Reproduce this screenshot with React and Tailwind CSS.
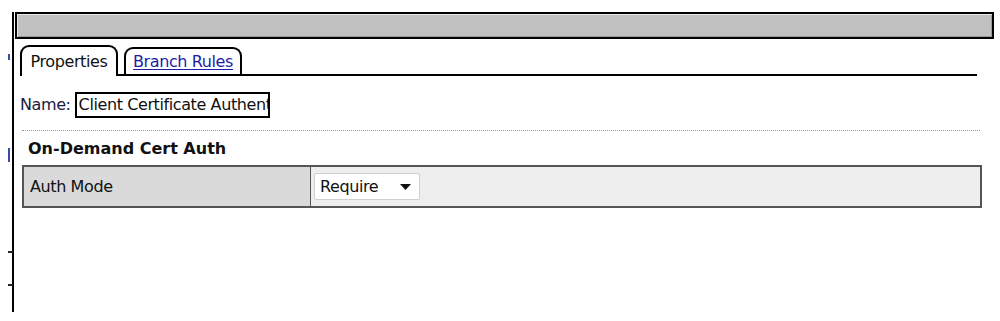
export default function App() {
  return (
    <div
      className="relative w-[1000px] h-[321px] bg-white overflow-hidden text-[#111]"
      style={{ fontFamily: '"DejaVu Sans", "Noto Sans", sans-serif' }}
    >
      {/* left edge marks */}
      <span className="absolute left-[8px] top-[54px] w-[2px] h-[6px] bg-[#3a4aa8]" />
      <span className="absolute left-[8px] top-[148px] w-[2px] h-[14px] bg-[#3a4aa8]" />
      <span className="absolute left-[8px] top-[251px] w-[5px] h-[2px] bg-[#222]" />
      <span className="absolute left-[8px] top-[284px] w-[5px] h-[2px] bg-[#222]" />

      <div className="ml-[12px] mt-[12px] h-[300px] w-[982px] border-l-2 border-black">
        {/* title bar */}
        <div className="ml-[1px] h-[27px] w-[979px] border-2 border-black bg-[#c0c0c0] shadow-[inset_1px_1px_0_#e6e6e6,inset_-1px_-1px_0_#9a9a9a]" />

        {/* tabs */}
        <div className="mt-[6px] ml-[6px] w-[957px] h-[31px] flex items-end gap-[6px] border-b-2 border-black">
          <div className="relative -mb-[2px] h-[31px] w-[98px] bg-white border-2 border-b-0 border-black rounded-t-[9px] flex items-center justify-center text-[16px] leading-none tracking-[-0.4px]">
            Properties
          </div>
          <div className="h-[27px] w-[118px] border-2 border-b-0 border-black rounded-t-[9px] flex items-center justify-center text-[16px] leading-none tracking-[-0.4px] text-[#1c1ca8] underline underline-offset-2">
            Branch Rules
          </div>
        </div>

        {/* name row */}
        <div className="mt-[16px] ml-[6px] flex items-center gap-[4px] text-[16px] tracking-[-0.4px]">
          <span className="text-[#1a1a40]">Name:</span>
          <div className="h-[26px] w-[195px] border-2 border-black overflow-hidden whitespace-nowrap pl-[2px] leading-[22px]">
            Client Certificate Authentication
          </div>
        </div>

        {/* dotted separator */}
        <div className="mt-[12px] ml-[8px] w-[958px] border-t border-dotted border-[#9a9a9a]" />

        {/* section heading */}
        <div className="mt-[8px] ml-[14px] text-[16px] font-bold leading-[20px]">
          On-Demand Cert Auth
        </div>

        {/* property table */}
        <div className="mt-[6px] ml-[8px] w-[960px] h-[43px] border-2 border-[#555] flex">
          <div className="w-[287px] bg-[#dadada] border-r border-[#555] flex items-center pl-[6px] text-[16px] tracking-[-0.4px]">
            Auth Mode
          </div>
          <div className="flex-1 bg-[#eeeeee] flex items-center pl-[3px]">
            <div className="h-[27px] w-[106px] bg-white border border-[#cfcfcf] rounded-[2px] flex items-center justify-between pl-[5px] pr-[8px] text-[16px] tracking-[-0.4px]">
              <span>Require</span>
              <svg width="11" height="6" viewBox="0 0 11 6">
                <path d="M0 0 L11 0 L5.5 6 Z" fill="#111" />
              </svg>
            </div>
          </div>
        </div>
      </div>
    </div>
  );
}
